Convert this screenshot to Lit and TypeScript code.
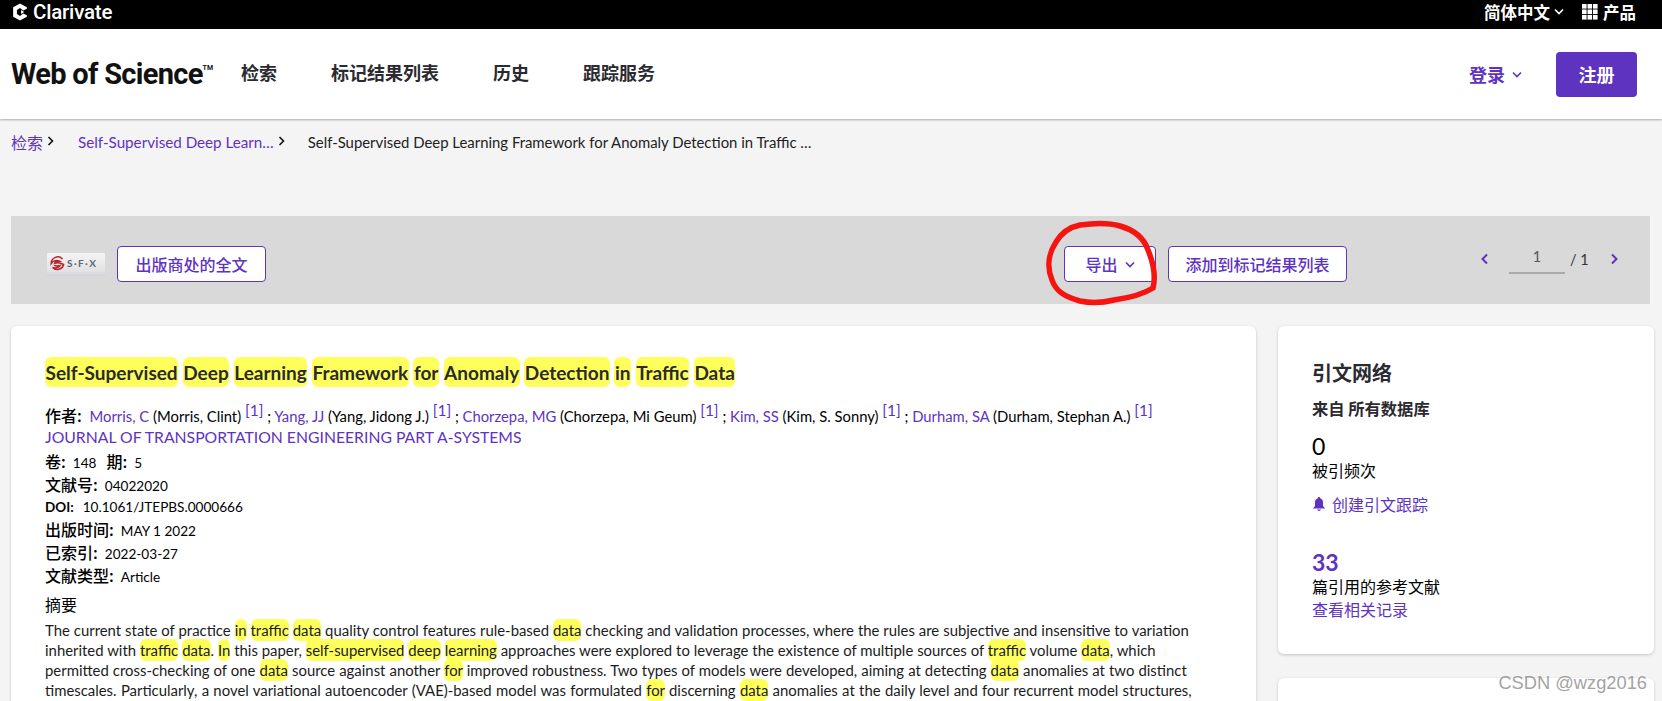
import { LitElement, css, html, svg } from "lit";
import { customElement } from "lit/decorators.js";

// *word* marks a search-term highlight; fit nudges word spacing so the line ends line up
const ABSTRACT = [
  {
    fit: 0.15,
    text: "The current state of practice *in* *traffic* *data* quality control features rule-based *data* checking and validation processes, where the rules are subjective and insensitive to variation",
  },
  {
    fit: 0.08,
    text: "inherited with *traffic* *data*. *In* this paper, *self-supervised* *deep* *learning* approaches were explored to leverage the existence of multiple sources of *traffic* volume *data*, which",
  },
  {
    fit: 0.25,
    text: "permitted cross-checking of one *data* source against another *for* improved robustness. Two types of models were developed, aiming at detecting *data* anomalies at two distinct",
  },
  {
    fit: 0.5,
    text: "timescales. Particularly, a novel variational autoencoder (VAE)-based model was formulated *for* discerning *data* anomalies at the daily level and four recurrent model structures,",
  },
];

const TITLE = "*Self-Supervised* *Deep* *Learning* *Framework* *for* *Anomaly* *Detection* *in* *Traffic* *Data*";

const AUTHORS = [
  ["Morris, C", "(Morris, Clint)"],
  ["Yang, JJ", "(Yang, Jidong J.)"],
  ["Chorzepa, MG", "(Chorzepa, Mi Geum)"],
  ["Kim, SS", "(Kim, S. Sonny)"],
  ["Durham, SA", "(Durham, Stephan A.)"],
];

const marked = (line: string) =>
  line.split("*").map((part, i) => (i % 2 ? html`<mark>${part}</mark>` : part));

const chevronDown = svg`<path d="M1 1.5 L5 5.5 L9 1.5" fill="none" stroke="currentColor" stroke-width="1.6"/>`;

@customElement("app-root")
export class AppRoot extends LitElement {
  static styles = css`
    :host {
      display: block;
      position: relative;
      width: 1662px;
      height: 701px;
      overflow: hidden;
      background: #f4f4f4;
      color: #000;
      font-family: "Lato", "Noto Sans CJK SC", sans-serif;
    }
    .topbar {
      height: 29px;
      box-sizing: border-box;
      background: #000;
      color: #fff;
      display: flex;
      align-items: center;
      padding: 0 26px 6px 12px;
    }
    .clarivate {
      display: flex;
      align-items: center;
      gap: 5px;
      font: 500 20.5px "Roboto", sans-serif;
      letter-spacing: -0.2px;
    }
    .topbar-right {
      margin-left: auto;
      display: flex;
      align-items: center;
      font: 700 16.5px "Noto Sans CJK SC", sans-serif;
    }
    .topbar-right .lang-chev {
      margin: 0 18px 0 4px;
    }
    .topbar-right .grid-icon {
      margin-right: 5px;
    }
    .header {
      height: 90px;
      background: #fff;
      display: flex;
      align-items: center;
      box-shadow: 0 1px 2px rgba(0, 0, 0, 0.3);
      padding: 0 25px 0 11px;
      position: relative;
    }
    .wos {
      width: 230px;
      font: 700 29px "Roboto", sans-serif;
      letter-spacing: -0.7px;
      color: #111;
      white-space: nowrap;
    }
    .wos sup {
      font-size: 7px;
      letter-spacing: 0;
      vertical-align: 14px;
      line-height: 0;
    }
    .nav {
      display: flex;
      gap: 54px;
      margin-top: -4px;
      font: 700 18px "Noto Sans CJK SC", sans-serif;
      color: #2a2a30;
    }
    .header-right {
      margin-left: auto;
      display: flex;
      align-items: center;
      color: #5e33bf;
      font: 700 18px "Noto Sans CJK SC", sans-serif;
    }
    .header-right svg {
      margin: 0 34px 0 7px;
    }
    .signup {
      width: 81px;
      height: 45px;
      border-radius: 4px;
      background: #5e33bf;
      color: #fff;
      display: flex;
      align-items: center;
      justify-content: center;
    }
    .crumbs {
      height: 97px;
      padding: 13px 11px 0;
      box-sizing: border-box;
      display: flex;
      align-items: flex-start;
      font-size: 15.2px;
      line-height: 20px;
      white-space: nowrap;
    }
    .crumbs a {
      color: #5e33bf;
    }
    .crumbs .root {
      font-size: 16px;
      font-family: "Noto Sans CJK SC", sans-serif;
    }
    .crumbs svg {
      margin: 4px 0 0 4px;
    }
    .crumbs .c2 {
      margin-left: 24px;
    }
    .crumbs .c3 {
      margin-left: 23px;
      font-size: 14.9px;
      color: #222;
    }
    .toolbar {
      margin: 0 12px 0 11px;
      height: 88px;
      box-sizing: border-box;
      background: #d9d9d9;
      display: flex;
      align-items: center;
      padding: 8px 0 0 36px;
    }
    .sfx {
      margin-right: 12px;
      display: block;
    }
    .btn {
      height: 36px;
      box-sizing: border-box;
      border: 1px solid #5e33bf;
      border-radius: 4px;
      background: #fff;
      color: #5e33bf;
      font: 500 16px "Noto Sans CJK SC", sans-serif;
      display: flex;
      align-items: center;
      justify-content: center;
      white-space: nowrap;
    }
    .btn.full {
      width: 149px;
    }
    .btn.export {
      width: 92px;
      margin-left: 798px;
      gap: 7px;
    }
    .btn.add {
      width: 179px;
      margin-left: 12px;
      margin-right: 133px;
    }
    .pager {
      display: flex;
      align-items: center;
      font-size: 14.5px;
      color: #333;
      margin-top: -10px;
    }
    .page-input {
      width: 56px;
      height: 27px;
      margin: 0 5px 0 20px;
      border-bottom: 2px solid #aaa;
      text-align: center;
      line-height: 24px;
      color: #555;
    }
    .pager .next {
      margin-left: 21px;
    }
    .pager svg {
      color: #5e33bf;
    }
    .main {
      margin: 22px 8px 0 11px;
      display: grid;
      grid-template-columns: 1245px 376px;
      gap: 22px;
      align-items: start;
    }
    .card {
      background: #fff;
      border-radius: 6px;
      box-shadow: 0 1px 3px rgba(0, 0, 0, 0.2);
    }
    .record {
      height: 420px;
      padding: 31px 0 0 34px;
      box-sizing: border-box;
      white-space: nowrap;
    }
    mark {
      background: #ffff5c;
      color: inherit;
      border-radius: 6px;
      padding: 2px 0;
    }
    h1 {
      margin: 0 0 16px;
      font: 700 19px/30px "Lato", "Noto Sans CJK SC", sans-serif;
      color: #2a2a30;
    }
    h1 mark {
      padding: 3.5px 0.5px;
    }
    .authors {
      font-size: 14.8px;
      line-height: 22px;
      height: 22px;
    }
    .authors a,
    .authors sup {
      color: #5e33bf;
    }
    .authors sup {
      font-size: 15.5px;
      line-height: 0;
    }
    .label {
      font: 500 16px "Noto Sans CJK SC", sans-serif;
      margin-right: 7px;
    }
    .authors .label {
      margin-right: 4px;
    }
    .journal {
      color: #5e33bf;
      font-size: 15.75px;
      line-height: 24px;
    }
    .field {
      font-size: 13.6px;
      line-height: 23px;
      height: 23px;
    }
    .field .gap {
      margin-left: 10px;
    }
    .field .latin {
      font: 700 13.5px "Lato", sans-serif;
      margin-right: 9px;
    }
    .field.doi {
      margin-top: 1px;
      height: 21px;
    }
    .abstract-head {
      font: 400 16px/20px "Noto Sans CJK SC", sans-serif;
      margin: 8px 0 6px;
    }
    .abstract div {
      font-size: 14.9px;
      line-height: 20px;
      height: 20px;
      color: #1b1b22;
    }
    .aside {
      display: flex;
      flex-direction: column;
      gap: 24px;
    }
    .network {
      height: 328px;
      box-sizing: border-box;
      padding: 31px 0 0 34px;
    }
    .network h2 {
      margin: 0;
      font: 700 20px/32px "Noto Sans CJK SC", sans-serif;
      color: #2a2a30;
    }
    .network h3 {
      margin: 7px 0 0;
      font: 700 16.3px/24px "Noto Sans CJK SC", sans-serif;
      color: #2a2a30;
    }
    .count {
      margin-top: 13px;
      font-size: 23px;
      line-height: 26px;
    }
    .sub {
      font: 400 16px/22px "Noto Sans CJK SC", sans-serif;
    }
    .link {
      font: 400 16px/22px "Noto Sans CJK SC", sans-serif;
      color: #5e33bf;
    }
    .alert {
      margin-top: 12px;
      display: flex;
      align-items: center;
      gap: 6px;
    }
    .refs {
      margin-top: 34px;
      font-size: 23px;
      font-weight: 700;
      line-height: 26px;
      color: #5e33bf;
    }
    .related {
      margin-top: 1px;
    }
    .second {
      height: 100px;
    }
    .scribble {
      position: absolute;
      left: 1044px;
      top: 220px;
      pointer-events: none;
    }
    .watermark {
      position: absolute;
      right: 15px;
      top: 672px;
      font: 400 18.3px "Liberation Sans", sans-serif;
      color: rgba(120, 120, 120, 0.7);
    }
  `;

  render() {
    return html`
      <div class="topbar">
        <div class="clarivate">
          <svg width="16" height="18" viewBox="0 0 15 17">
            <path
              d="M7.5 0.5 L14 4 L14 5.5 L10.5 7 L7.5 4.8 L4.6 6.5 L4.6 10.5 L7.5 12.2 L10.5 10 L14 11.5 L14 13 L7.5 16.5 L1 13 L1 4 Z"
              fill="#fff"
            />
            <path d="M8.5 6.5 L11.5 8.5 L8.5 10.5 Z" fill="#fff" />
          </svg>
          Clarivate
        </div>
        <div class="topbar-right">
          简体中文
          <svg class="lang-chev" width="10" height="7" viewBox="0 0 10 7">${chevronDown}</svg>
          <svg class="grid-icon" width="16" height="16" viewBox="0 0 16 16" fill="#fff">
            ${[0, 5.5, 11].flatMap((y) =>
              [0, 5.5, 11].map((x) => svg`<rect x=${x} y=${y} width="4.6" height="4.6" />`),
            )}
          </svg>
          产品
        </div>
      </div>

      <div class="header">
        <div class="wos">Web of Science<sup>TM</sup></div>
        <nav class="nav">
          <span>检索</span><span>标记结果列表</span><span>历史</span><span>跟踪服务</span>
        </nav>
        <div class="header-right">
          登录
          <svg width="10" height="7" viewBox="0 0 10 7">${chevronDown}</svg>
          <div class="signup">注册</div>
        </div>
      </div>

      <div class="crumbs">
        <a class="root">检索</a>
        <svg width="7" height="10" viewBox="0 0 7 10">
          <path d="M1.5 1 L5.5 5 L1.5 9" fill="none" stroke="#111" stroke-width="1.6" />
        </svg>
        <a class="c2">Self-Supervised Deep Learn…</a>
        <svg width="7" height="10" viewBox="0 0 7 10">
          <path d="M1.5 1 L5.5 5 L1.5 9" fill="none" stroke="#111" stroke-width="1.6" />
        </svg>
        <span class="c3">Self-Supervised Deep Learning Framework for Anomaly Detection in Traffic …</span>
      </div>

      <div class="toolbar">
        <svg class="sfx" width="58" height="23" viewBox="0 0 58 23">
          <defs>
            <linearGradient id="sfxbg" x1="0" y1="0" x2="0" y2="1">
              <stop offset="0" stop-color="#f4f4f4" />
              <stop offset="0.8" stop-color="#e2e2e4" />
              <stop offset="1" stop-color="#cfd2d8" />
            </linearGradient>
          </defs>
          <rect width="58" height="23" fill="url(#sfxbg)" />
          <path
            d="M15.5 6 A6.5 6.5 0 0 0 4.2 10.5 C6 7.5 10 7 12.5 8.2 C10 8.4 8 9 7.5 10.4 C10 9.6 14 10 16.6 11.5 A6.5 6.5 0 0 1 5.6 14.5 C8 15.5 11.5 15 13 12.6 C11 13 9 13 7 12.4"
            fill="none"
            stroke="#b3262c"
            stroke-width="1.5"
          />
          <text x="20" y="14" font-family="Lato" font-weight="700" font-size="10" fill="#5b6478" letter-spacing="1.4">S·F·X</text>
        </svg>
        <div class="btn full">出版商处的全文</div>
        <div class="btn export">
          导出
          <svg width="10" height="7" viewBox="0 0 10 7">${chevronDown}</svg>
        </div>
        <div class="btn add">添加到标记结果列表</div>
        <div class="pager">
          <svg width="9" height="12" viewBox="0 0 9 12">
            <path d="M7 1.5 L2.5 6 L7 10.5" fill="none" stroke="currentColor" stroke-width="2" />
          </svg>
          <div class="page-input">1</div>
          <span>/ 1</span>
          <svg class="next" width="9" height="12" viewBox="0 0 9 12">
            <path d="M2 1.5 L6.5 6 L2 10.5" fill="none" stroke="currentColor" stroke-width="2" />
          </svg>
        </div>
      </div>

      <div class="main">
        <section class="card record">
          <h1>${marked(TITLE)}</h1>
          <div class="authors">
            <span class="label">作者:</span>
            ${AUTHORS.map(
              ([short, full], i) => html`<a>${short}</a> ${full} <sup>[1]</sup>${i < AUTHORS.length - 1 ? " ; " : ""}`,
            )}
          </div>
          <div class="journal">JOURNAL OF TRANSPORTATION ENGINEERING PART A-SYSTEMS</div>
          <div class="field">
            <span class="label">卷:</span>148<span class="label gap">期:</span>5
          </div>
          <div class="field"><span class="label">文献号:</span>04022020</div>
          <div class="field doi"><span class="label latin">DOI:</span>10.1061/JTEPBS.0000666</div>
          <div class="field"><span class="label">出版时间:</span>MAY 1 2022</div>
          <div class="field"><span class="label">已索引:</span>2022-03-27</div>
          <div class="field"><span class="label">文献类型:</span>Article</div>
          <div class="abstract-head">摘要</div>
          <div class="abstract">
            ${ABSTRACT.map(
              (line) => html`<div style="word-spacing:${line.fit}px">${marked(line.text)}</div>`,
            )}
          </div>
        </section>

        <aside class="aside">
          <section class="card network">
            <h2>引文网络</h2>
            <h3>来自 所有数据库</h3>
            <div class="count">0</div>
            <div class="sub">被引频次</div>
            <div class="link alert">
              <svg width="14" height="16" viewBox="0 0 14 16" fill="currentColor">
                <path d="M7 1 C7.8 1 8.2 1.5 8.2 2.2 C10.2 2.8 11 4.5 11 6.5 L11 10 L13 12.5 L1 12.5 L3 10 L3 6.5 C3 4.5 3.8 2.8 5.8 2.2 C5.8 1.5 6.2 1 7 1 Z" />
                <path d="M5.2 13.6 L8.8 13.6 C8.6 15.4 5.4 15.4 5.2 13.6 Z" />
              </svg>
              创建引文跟踪
            </div>
            <div class="refs">33</div>
            <div class="sub">篇引用的参考文献</div>
            <div class="link related">查看相关记录</div>
          </section>
          <section class="card second"></section>
        </aside>
      </div>

      <svg class="scribble" width="120" height="90" viewBox="0 0 120 90">
        <path
          d="M36 5 C50 3 66 3 76 6 C90 10 100 18 104 30 C109 42 112 56 109 68 C98 75 84 78 70 80 C58 83 46 83 36 81 C22 77 12 72 8 60 C3 48 4 34 12 22 C18 12 26 7 36 5"
          fill="none"
          stroke="#f5140f"
          stroke-width="5.5"
          stroke-linecap="round"
        />
      </svg>
      <div class="watermark">CSDN @wzg2016</div>
    `;
  }
}
